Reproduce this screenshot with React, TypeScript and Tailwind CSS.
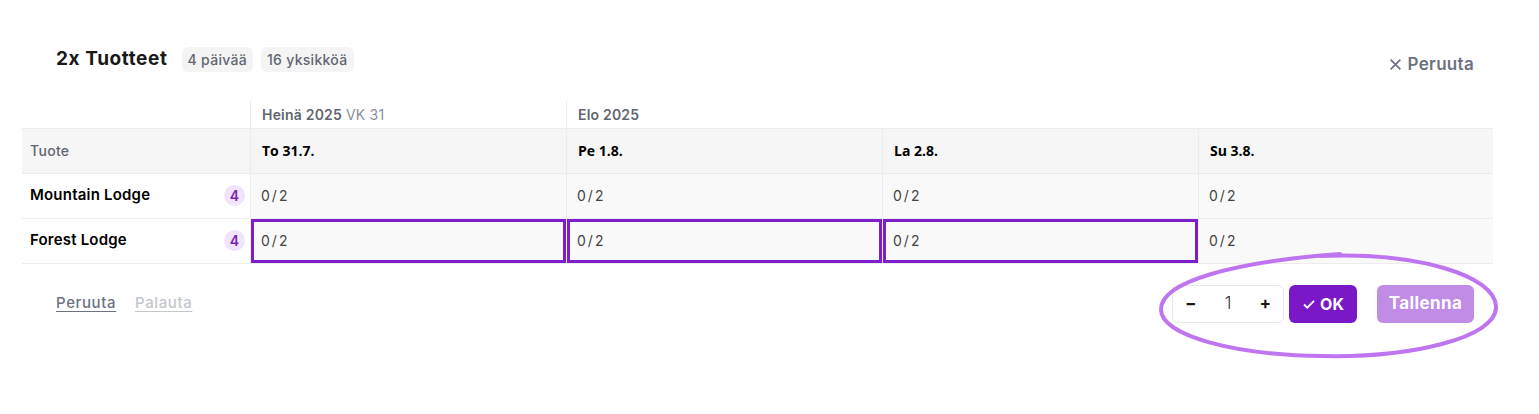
import React from 'react';

const days = ['To 31.7.', 'Pe 1.8.', 'La 2.8.', 'Su 3.8.'];

const products = [
  { name: 'Mountain Lodge', count: 4, selected: [false, false, false, false] },
  { name: 'Forest Lodge', count: 4, selected: [true, true, true, false] },
];

const cols = 'grid grid-cols-[228px_316px_316px_316px_295px]';

export default function App() {
  return (
    <div
      className="relative w-[1539px] h-[414px] bg-white text-[#1a1a1a]"
      style={{ fontFamily: 'Inter, "Noto Sans", sans-serif' }}
    >
      <div className="pl-[22px] pr-[46px] pt-[45px]">
        {/* header */}
        <div className="flex items-start justify-between pl-[34px] pr-[19px]">
          <div className="flex items-center gap-[8px] h-[28px]">
            <h2 className="text-[19px] font-bold tracking-[0.6px] mr-[6px]">2x Tuotteet</h2>
            <span className="rounded-md bg-[#f4f4f5] px-[6px] py-[2px] text-[14px] font-medium tracking-[0.3px] text-[#5f6670]">
              4 päivää
            </span>
            <span className="rounded-md bg-[#f4f4f5] px-[6px] py-[2px] text-[14px] font-medium tracking-[0.3px] text-[#5f6670]">
              16 yksikköä
            </span>
          </div>
          <button className="mt-[7px] flex items-center gap-[6px] text-[17px] font-semibold tracking-[0.3px] text-[#6b7280]">
            <svg width="13" height="13" viewBox="0 0 12 12" fill="none" stroke="currentColor" strokeWidth="1.6">
              <path d="M1.5 1.5l9 9M10.5 1.5l-9 9" />
            </svg>
            Peruuta
          </button>
        </div>

        {/* table */}
        <div className="mt-[23px] text-[13px]">
          <div className={`${cols} h-[28px] border-b border-[#ececec]`}>
            <div />
            <div className="flex items-center border-l border-[#ececec] px-[11px] text-[14px] font-semibold tracking-[0.2px] text-[#5f6670]">
              Heinä 2025<span className="ml-[4px] font-normal text-[#8a9099]">VK 31</span>
            </div>
            <div className="col-span-3 flex items-center border-l border-[#ececec] px-[11px] text-[14px] font-semibold tracking-[0.2px] text-[#5f6670]">
              Elo 2025
            </div>
          </div>
          <div className={`${cols} h-[45px] border-b border-[#ececec] bg-[#f6f6f6]`}>
            <div className="flex items-center px-[8px] text-[14px] font-medium tracking-[0.3px] text-[#5f6670]">Tuote</div>
            {days.map((d) => (
              <div
                key={d}
                className="flex items-center border-l border-[#ececec] px-[11px] text-[14px] font-bold text-black"
                style={{ fontFamily: '"Open Sans", sans-serif' }}
              >
                {d}
              </div>
            ))}
          </div>
          {products.map((p) => (
            <div key={p.name} className={`${cols} h-[45px] border-b border-[#ececec]`}>
              <div className="flex items-center justify-between bg-white pl-[8px] pr-[5px]">
                <span className="text-[15px] font-semibold tracking-[0.2px] text-black">{p.name}</span>
                <span className="flex h-[21px] w-[21px] items-center justify-center rounded-full bg-[#f1e3fb] text-[14px] font-semibold text-[#7b1fb8]">
                  {p.count}
                </span>
              </div>
              {p.selected.map((sel, i) => (
                <div key={i} className="border-l border-[#ececec] bg-[#f9f9f9]">
                  <div
                    className={`flex h-full items-center text-[14px] tracking-[2px] text-[#444] ${
                      sel ? 'border-[3px] border-[#7c1fca] pl-[7px]' : 'pl-[10px]'
                    }`}
                  >
                    0/2
                  </div>
                </div>
              ))}
            </div>
          ))}
        </div>

        {/* footer */}
        <div className="mt-[21px] flex items-center justify-between pl-[34px] pr-[19px]">
          <div className="flex items-center gap-[19px] text-[15px] font-medium tracking-[0.6px]">
            <button className="text-[#6b7280] underline underline-offset-[3px]">Peruuta</button>
            <button className="text-[#c2c6cc] underline underline-offset-[3px]">Palauta</button>
          </div>
          <div className="flex items-center">
            <div className="flex h-[38px] w-[112px] items-center justify-between rounded-md border border-[#e8e8e8] bg-white px-[12px] text-[17px]">
              <span className="font-bold">−</span>
              <span className="font-light text-[#333]">1</span>
              <span className="font-bold">+</span>
            </div>
            <button className="ml-[5px] flex h-[38px] w-[68px] items-center justify-center gap-[4px] rounded-md bg-[#7a17c6] text-[16px] font-bold text-white">
              <svg width="14" height="14" viewBox="0 0 14 14" fill="none" stroke="currentColor" strokeWidth="1.8">
                <path d="M2 7.5l3.2 3.2L12 3.8" />
              </svg>
              OK
            </button>
            <button className="ml-[20px] flex h-[38px] w-[97px] items-center justify-center rounded-md bg-[#c08ce6] text-[17px] font-bold tracking-[0.4px] text-white">
              Tallenna
            </button>
          </div>
        </div>
      </div>

      {/* hand drawn annotation */}
      <svg className="pointer-events-none absolute left-0 top-0" width="1539" height="414" fill="none">
        <path
          d="M1320 256 C1420 252, 1494 276, 1496 306 C1498 338, 1410 358, 1322 356 C1235 355, 1162 336, 1161 310 C1160 282, 1232 262, 1340 254"
          stroke="#bf75f0"
          strokeWidth="4"
          strokeLinecap="round"
        />
      </svg>
    </div>
  );
}
